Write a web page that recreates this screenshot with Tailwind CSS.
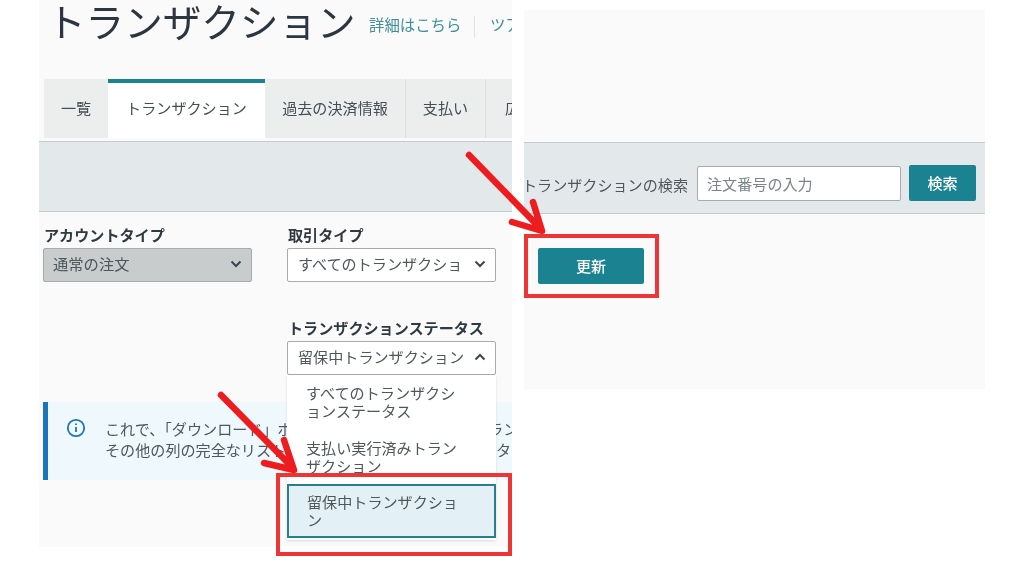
<!DOCTYPE html>
<html lang="ja">
<head>
    <meta charset="UTF-8">
    <title>トランザクション</title>
    <script src="https://cdn.jsdelivr.net/npm/@tailwindcss/browser@4"></script>
</head>
<body class="bg-white font-['Noto_Sans_CJK_JP','Noto_Sans',sans-serif] text-[#2f3a40] overflow-hidden">
<div class="relative w-[1024px] h-[565px] overflow-hidden pl-[39px] flex items-start gap-[12px] blur-[0.5px]">

    <!-- left capture -->
    <div class="relative w-[473px] h-[547px] bg-[#fafafa] overflow-hidden shrink-0">
        <div class="flex items-center h-[44px] pl-[8px] whitespace-nowrap">
            <h1 class="text-[38.6px] leading-[44px] mb-[4px] text-[#2b3640] w-[322px] shrink-0">トランザクション</h1>
            <a class="text-[15.4px] mt-[6px] text-[#3f8f9b] w-[105px] shrink-0">詳細はこちら</a>
            <span class="w-px h-[22px] mt-[10px] bg-[#dfe2e3] shrink-0"></span>
            <a class="text-[15.4px] mt-[6px] text-[#3f8f9b] pl-[15px]">ツアー</a>
        </div>

        <div class="flex h-[59px] ml-[5px] mt-[35px] bg-[#eceeee] text-[15.1px] text-[#444f55] whitespace-nowrap">
            <div class="w-[64px] shrink-0 flex items-center justify-center pb-[2px]">一覧</div>
            <div class="w-[157px] shrink-0 flex items-center justify-center bg-white border-t-4 border-[#1a8291] pb-[6px]">トランザクション</div>
            <div class="w-[141px] shrink-0 flex items-center justify-center border-r border-[#dcdfe0] pb-[2px]">過去の決済情報</div>
            <div class="w-[80px] shrink-0 flex items-center justify-center border-r border-[#dcdfe0] pb-[2px]">支払い</div>
            <div class="pl-[19px] shrink-0 flex items-center pb-[2px]">広告</div>
        </div>

        <div class="mt-[3px] h-[71px] bg-[#e3e9eb] border-y border-[#c6cbcc]"></div>

        <div class="flex pl-[4px] pt-[12px] gap-[35px]">
            <div class="w-[209px]">
                <div class="text-[15.1px] leading-[21px] font-bold text-[#2f3a40] pl-px">アカウントタイプ</div>
                <div class="h-[34px] mt-[3px] flex items-center justify-between pl-[9px] pr-[9px] pb-[3px] bg-[#c9cccd] border border-[#a6abad] rounded-[2px] text-[15.3px] text-[#4d575c]">
                    通常の注文
                    <svg class="w-[12px] h-[8px]" viewBox="0 0 12 8" fill="none" stroke="#3c464b" stroke-width="2"><path d="M1.500 1.500 6 6l4.500-4.500"/></svg>
                </div>
            </div>
            <div class="w-[209px]">
                <div class="text-[15.1px] leading-[21px] font-bold text-[#2f3a40] pl-px">取引タイプ</div>
                <div class="h-[34px] mt-[3px] flex items-center justify-between pl-[10px] pr-[9px] pb-[3px] bg-white border border-[#a6abad] rounded-[2px] text-[15.1px] text-[#4d575c] whitespace-nowrap">
                    すべてのトランザクショ
                    <svg class="w-[12px] h-[8px]" viewBox="0 0 12 8" fill="none" stroke="#3c464b" stroke-width="2"><path d="M1.500 1.500 6 6l4.500-4.500"/></svg>
                </div>
            </div>
        </div>

        <div class="pl-[248px] pt-[35px]">
            <div class="w-[209px]">
                <div class="text-[15.1px] leading-[21px] font-bold text-[#2f3a40] pl-px whitespace-nowrap">トランザクションステータス</div>
                <div class="h-[34px] mt-[3px] flex items-center justify-between pl-[10px] pr-[9px] pb-[3px] bg-white border border-[#a6abad] rounded-[2px] text-[15.1px] text-[#4d575c] whitespace-nowrap">
                    留保中トランザクション
                    <svg class="w-[12px] h-[8px]" viewBox="0 0 12 8" fill="none" stroke="#3c464b" stroke-width="2"><path d="M1.500 6.500 6 2l4.500 4.500"/></svg>
                </div>
            </div>
        </div>

        <!-- info alert, under the open dropdown -->
        <div class="mt-[27px] ml-[4px] h-[78px] bg-[#eef8fd] border-l-[5px] border-[#1b75bb] flex pl-[18px] pt-[16px] gap-[19px] text-[15.1px] leading-[21px] text-[#4d575c] whitespace-nowrap">
            <svg class="w-[20px] h-[20px] shrink-0" viewBox="0 0 20 20" fill="none" stroke="#1b75bb" stroke-width="1.800"><circle cx="10" cy="10" r="8.200"/><path d="M10 9v5M10 5.500v1.500"/></svg>
            <div>これで、「ダウンロード」ボタンをクリックすると、全トランザクション<br>その他の列の完全なリストをダウンロードできます。別のタブで確認</div>
        </div>

        <!-- open dropdown -->
        <div class="absolute left-[248px] top-[375px] w-[209px] h-[165px] bg-white shadow-sm text-[15.1px] leading-[18px] text-[#4d575c]">
            <div class="pl-[19px] pr-[30px] pt-[8px] h-[55px]">すべてのトランザクションステータス</div>
            <div class="pl-[19px] pr-[30px] pt-[8px] h-[54px]">支払い実行済みトランザクション</div>
            <div class="pl-[18px] pr-[29px] pt-[6px] h-[54px] bg-[#e3f1f6] border-2 border-[#2b7f8c]">留保中トランザクション</div>
        </div>
    </div>

    <!-- right capture -->
    <div class="w-[461px] h-[379px] mt-[10px] bg-[#fafafa] shrink-0">
        <div class="mt-[132px] h-[72px] pt-[10px] bg-[#e3e9eb] border-y border-[#c6cbcc] flex items-center whitespace-nowrap">
            <div class="w-[164px] overflow-hidden flex justify-end text-[15.1px] text-[#4d575c] pt-[2px]"><span class="shrink-0">トランザクションの検索</span></div>
            <div class="ml-[9px] w-[204px] h-[35px] bg-white border border-[#a6abad] rounded-[2px] flex items-center pl-[9px] text-[15.1px] text-[#7b8488]">注文番号の入力</div>
            <div class="ml-[8px] w-[67px] h-[36px] pb-[1px] bg-[#1a8291] rounded-[2px] flex items-center justify-center text-[15.1px] font-medium text-white">検索</div>
        </div>
        <div class="ml-[14px] mt-[34px] w-[106px] h-[36px] pb-[1px] bg-[#1a8291] rounded-[2px] flex items-center justify-center text-[15.1px] font-medium text-white">更新</div>
    </div>

    <!-- annotations laid over both captures -->
    <div class="absolute left-[276px] top-[473px] w-[236px] h-[83px] border-[4px] border-[#ee3535]"></div>
    <div class="absolute left-[524px] top-[234px] w-[135px] h-[64px] border-[4px] border-[#ee3535]"></div>
    <svg class="absolute left-0 top-0 w-[1024px] h-[565px]" viewBox="0 0 1024 565" fill="none" stroke="#ee1b1f" stroke-width="6.500" stroke-linecap="round" stroke-linejoin="round">
        <path d="M221 395 293 468M284 440 294 470 264 463"/>
        <path d="M469 155 541 229M533 202 542 231 512 222"/>
    </svg>
</div>
</body>
</html>
